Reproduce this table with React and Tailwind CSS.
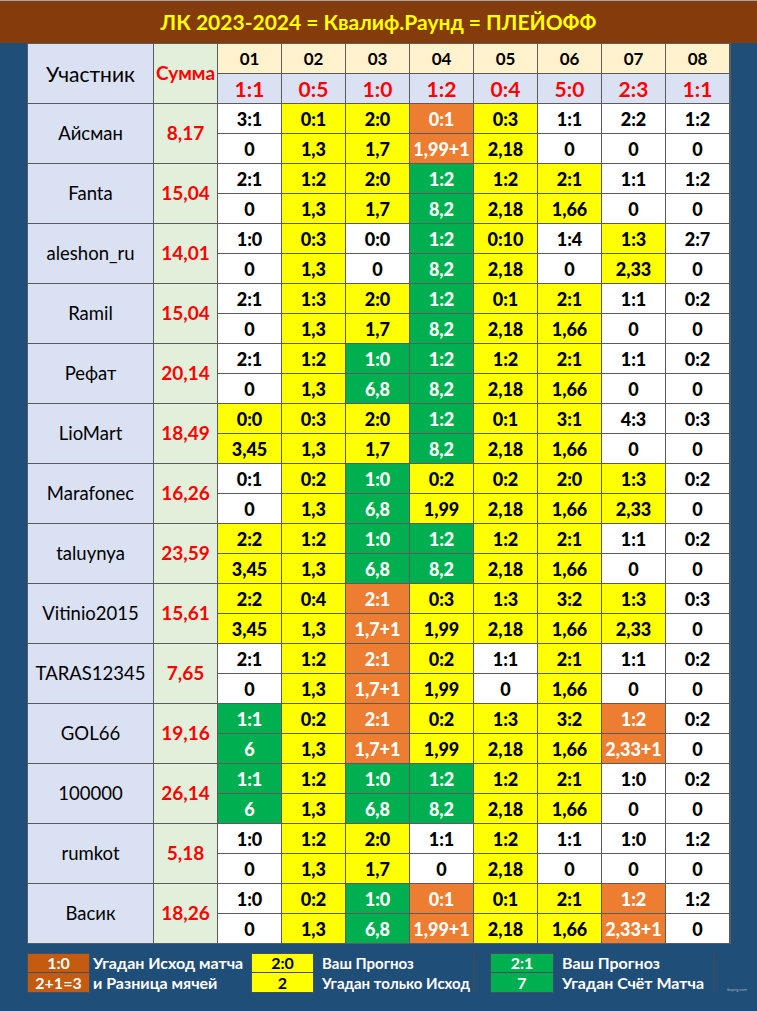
import React from "react";

const rows = [
  ["Айсман", "8,17", [["3:1","0","W"],["0:1","1,3","Y"],["2:0","1,7","Y"],["0:1","1,99+1","O"],["0:3","2,18","Y"],["1:1","0","W"],["2:2","0","W"],["1:2","0","W"]]],
  ["Fanta", "15,04", [["2:1","0","W"],["1:2","1,3","Y"],["2:0","1,7","Y"],["1:2","8,2","G"],["1:2","2,18","Y"],["2:1","1,66","Y"],["1:1","0","W"],["1:2","0","W"]]],
  ["aleshon_ru", "14,01", [["1:0","0","W"],["0:3","1,3","Y"],["0:0","0","W"],["1:2","8,2","G"],["0:10","2,18","Y"],["1:4","0","W"],["1:3","2,33","Y"],["2:7","0","W"]]],
  ["Ramil", "15,04", [["2:1","0","W"],["1:3","1,3","Y"],["2:0","1,7","Y"],["1:2","8,2","G"],["0:1","2,18","Y"],["2:1","1,66","Y"],["1:1","0","W"],["0:2","0","W"]]],
  ["Рефат", "20,14", [["2:1","0","W"],["1:2","1,3","Y"],["1:0","6,8","G"],["1:2","8,2","G"],["1:2","2,18","Y"],["2:1","1,66","Y"],["1:1","0","W"],["0:2","0","W"]]],
  ["LioMart", "18,49", [["0:0","3,45","Y"],["0:3","1,3","Y"],["2:0","1,7","Y"],["1:2","8,2","G"],["0:1","2,18","Y"],["3:1","1,66","Y"],["4:3","0","W"],["0:3","0","W"]]],
  ["Marafonec", "16,26", [["0:1","0","W"],["0:2","1,3","Y"],["1:0","6,8","G"],["0:2","1,99","Y"],["0:2","2,18","Y"],["2:0","1,66","Y"],["1:3","2,33","Y"],["0:2","0","W"]]],
  ["taluynya", "23,59", [["2:2","3,45","Y"],["1:2","1,3","Y"],["1:0","6,8","G"],["1:2","8,2","G"],["1:2","2,18","Y"],["2:1","1,66","Y"],["1:1","0","W"],["0:2","0","W"]]],
  ["Vitinio2015", "15,61", [["2:2","3,45","Y"],["0:4","1,3","Y"],["2:1","1,7+1","O"],["0:3","1,99","Y"],["1:3","2,18","Y"],["3:2","1,66","Y"],["1:3","2,33","Y"],["0:3","0","W"]]],
  ["TARAS12345", "7,65", [["2:1","0","W"],["1:2","1,3","Y"],["2:1","1,7+1","O"],["0:2","1,99","Y"],["1:1","0","W"],["2:1","1,66","Y"],["1:1","0","W"],["0:2","0","W"]]],
  ["GOL66", "19,16", [["1:1","6","G"],["0:2","1,3","Y"],["2:1","1,7+1","O"],["0:2","1,99","Y"],["1:3","2,18","Y"],["3:2","1,66","Y"],["1:2","2,33+1","O"],["0:2","0","W"]]],
  ["100000", "26,14", [["1:1","6","G"],["1:2","1,3","Y"],["1:0","6,8","G"],["1:2","8,2","G"],["1:2","2,18","Y"],["2:1","1,66","Y"],["1:0","0","W"],["0:2","0","W"]]],
  ["rumkot", "5,18", [["1:0","0","W"],["1:2","1,3","Y"],["2:0","1,7","Y"],["1:1","0","W"],["1:2","2,18","Y"],["1:1","0","W"],["1:0","0","W"],["1:2","0","W"]]],
  ["Васик", "18,26", [["1:0","0","W"],["0:2","1,3","Y"],["1:0","6,8","G"],["0:1","1,99+1","O"],["0:1","2,18","Y"],["2:1","1,66","Y"],["1:2","2,33+1","O"],["1:2","0","W"]]],
];

const matches = ["01","02","03","04","05","06","07","08"];
const results = ["1:1","0:5","1:0","1:2","0:4","5:0","2:3","1:1"];

const colorCls = {
  W: "bg-white text-black",
  Y: "bg-[#ffff00] text-black",
  G: "bg-[#00b050] text-white",
  O: "bg-[#ed7d31] text-white",
};

const cell = "flex items-center justify-center font-black text-[18px] leading-none";

export default function App() {
  return (
    <div
      className="w-[757px] h-[1011px] bg-[#1f4e79] overflow-hidden"
      style={{ fontFamily: "Lato, 'Noto Sans', sans-serif" }}
    >
      <div className="h-[43px] bg-[#843c0c] border-t border-[#a6a6a6] flex items-center justify-center text-[#ffff00] font-bold text-[21px]">
        ЛК 2023-2024 = Квалиф.Раунд = ПЛЕЙОФФ
      </div>

      <div className="pl-[27px]">
        <div className="grid w-[704px] grid-cols-[125px_63px_repeat(8,63px)] auto-rows-[29px] gap-px bg-[#5b5b5b] border border-[#5b5b5b]">
          <div className="row-span-2 bg-[#d9e1f2] flex items-center justify-center text-[21px] text-black">
            Участник
          </div>
          <div className="row-span-2 bg-[#e2efda] flex items-center justify-center text-[19px] font-bold text-[#ff0000]">
            Сумма
          </div>
          {matches.map((m) => (
            <div key={m} className="flex items-center justify-center font-bold leading-none bg-[#fff2cc] text-black text-[17px]">
              {m}
            </div>
          ))}
          {results.map((r, i) => (
            <div key={i} className="flex items-center justify-center bg-[#d9e1f2] text-[#ff0000] font-bold text-[21px] leading-none">
              {r}
            </div>
          ))}
          {rows.map(([name, sum, cells]) => (
            <React.Fragment key={name}>
              <div className="row-span-2 bg-[#d9e1f2] flex items-center justify-center text-[18.5px] text-black">
                {name}
              </div>
              <div className="row-span-2 bg-[#e2efda] flex items-center justify-center text-[19px] font-bold text-[#ff0000]">
                {sum}
              </div>
              {cells.map((c, i) => (
                <div key={"p" + i} className={`${cell} ${colorCls[c[2]]}`}>
                  {c[0]}
                </div>
              ))}
              {cells.map((c, i) => (
                <div key={"s" + i} className={`${cell} ${colorCls[c[2]]}`}>
                  {c[1]}
                </div>
              ))}
            </React.Fragment>
          ))}
        </div>
      </div>

      <div className="pl-[27px] mt-[9px] flex items-start text-white font-bold text-[16px] leading-none">
        <div className="w-[63px] border border-[#3f4f5f] flex flex-col">
          <div className="h-[19px] bg-[#c55a11] border-b border-[#3f4f5f] flex items-center justify-center">1:0</div>
          <div className="h-[19px] bg-[#c55a11] flex items-center justify-center">2+1=3</div>
        </div>
        <div className="ml-[3px] w-[158px] flex flex-col">
          <div className="h-[20px] flex items-center">Угадан Исход матча</div>
          <div className="h-[20px] flex items-center">и Разница мячей</div>
        </div>
        <div className="w-[63px] border border-[#3f4f5f] flex flex-col text-black">
          <div className="h-[19px] bg-[#ffff00] border-b border-[#3f4f5f] flex items-center justify-center">2:0</div>
          <div className="h-[19px] bg-[#ffff00] flex items-center justify-center">2</div>
        </div>
        <div className="ml-[8px] w-[152px] flex flex-col text-[15px]">
          <div className="h-[20px] flex items-center">Ваш Прогноз</div>
          <div className="h-[20px] flex items-center">Угадан только Исход</div>
        </div>
        <div className="w-px h-[40px] bg-[#4a4a4a]" />
        <div className="ml-[15px] w-[64px] border border-[#3f4f5f] flex flex-col">
          <div className="h-[19px] bg-[#00b050] border-b border-[#3f4f5f] flex items-center justify-center">2:1</div>
          <div className="h-[19px] bg-[#00b050] flex items-center justify-center">7</div>
        </div>
        <div className="ml-[8px] w-[152px] flex flex-col">
          <div className="h-[20px] flex items-center">Ваш Прогноз</div>
          <div className="h-[20px] flex items-center">Угадан Счёт Матча</div>
        </div>
        <div className="w-px h-[40px] bg-[#4a4a4a]" />
        <div className="ml-[12px] mt-[35px] text-[4px] font-normal text-[#9fb3c8]">ibspng.com</div>
      </div>
    </div>
  );
}
